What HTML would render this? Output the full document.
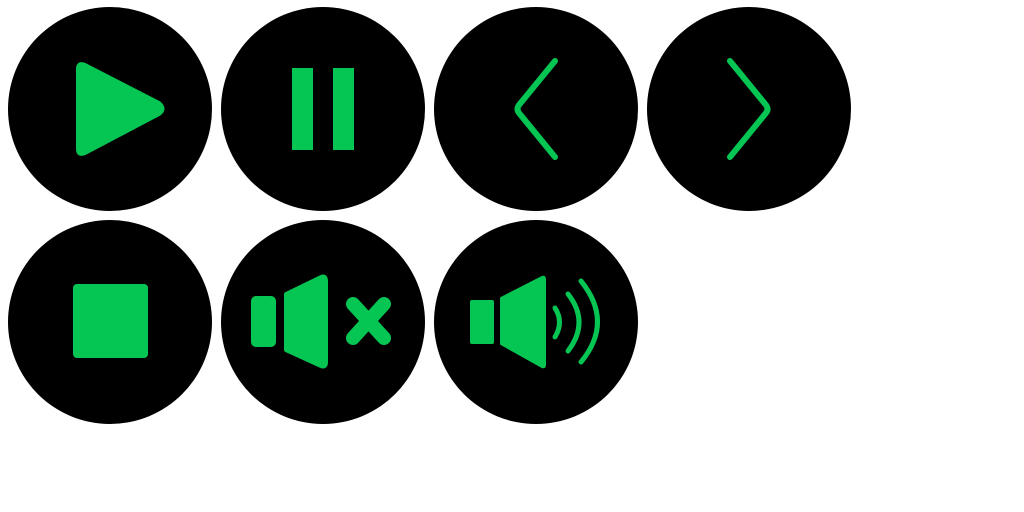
<!DOCTYPE html>
<html><head><style>html,body{margin:0;background:#fff;width:1024px;height:512px;overflow:hidden}</style></head>
<body>
<svg width="1024" height="512" viewBox="0 0 1024 512" xmlns="http://www.w3.org/2000/svg">
<g fill="#000">
<circle cx="110" cy="109" r="102"/><circle cx="323" cy="109" r="102"/><circle cx="536" cy="109" r="102"/><circle cx="749" cy="109" r="102"/>
<circle cx="110" cy="322" r="102"/><circle cx="323" cy="322" r="102"/><circle cx="536" cy="322" r="102"/>
</g>
<g fill="#05c553" stroke="none">
<path d="M78 69 Q78 62 85 65 L159 103 Q166 109 159 114 L85 153 Q78 156 78 149 Z" stroke="#05c553" stroke-width="4" stroke-linejoin="round"/>
<rect x="292" y="68" width="21" height="82"/><rect x="333" y="68" width="21" height="82"/>
<rect x="73" y="284" width="75" height="74" rx="4"/>
<rect x="251" y="296" width="25" height="51" rx="5"/>
<path d="M286 294 L321 277 Q326 275 326 281 L326 362 Q326 368 321 366 L286 350 Z" stroke="#05c553" stroke-width="4" stroke-linejoin="round"/>
<rect x="470" y="300" width="24" height="44" rx="2"/>
<path d="M501 298 L542 277 Q545 276 545 279 L545 365 Q545 368 542 367 L501 344 Z" stroke="#05c553" stroke-width="2" stroke-linejoin="round"/>
</g>
<g fill="none" stroke="#05c553" stroke-linecap="round" stroke-linejoin="round">
<path d="M555 61 L519 105 Q516 109 519 113 L555 157" stroke-width="6"/>
<path d="M730 61 L766 105 Q769 109 766 113 L730 157" stroke-width="6"/>
<path d="M353 304 L384 338 M384 304 L353 338" stroke-width="14"/>
<path d="M555 308 Q564 322 555 337" stroke-width="5"/>
<path d="M568 294 Q590 322 568 351" stroke-width="5"/>
<path d="M581 281 Q614 322 581 362" stroke-width="5"/>
</g>
</svg>
</body></html>
